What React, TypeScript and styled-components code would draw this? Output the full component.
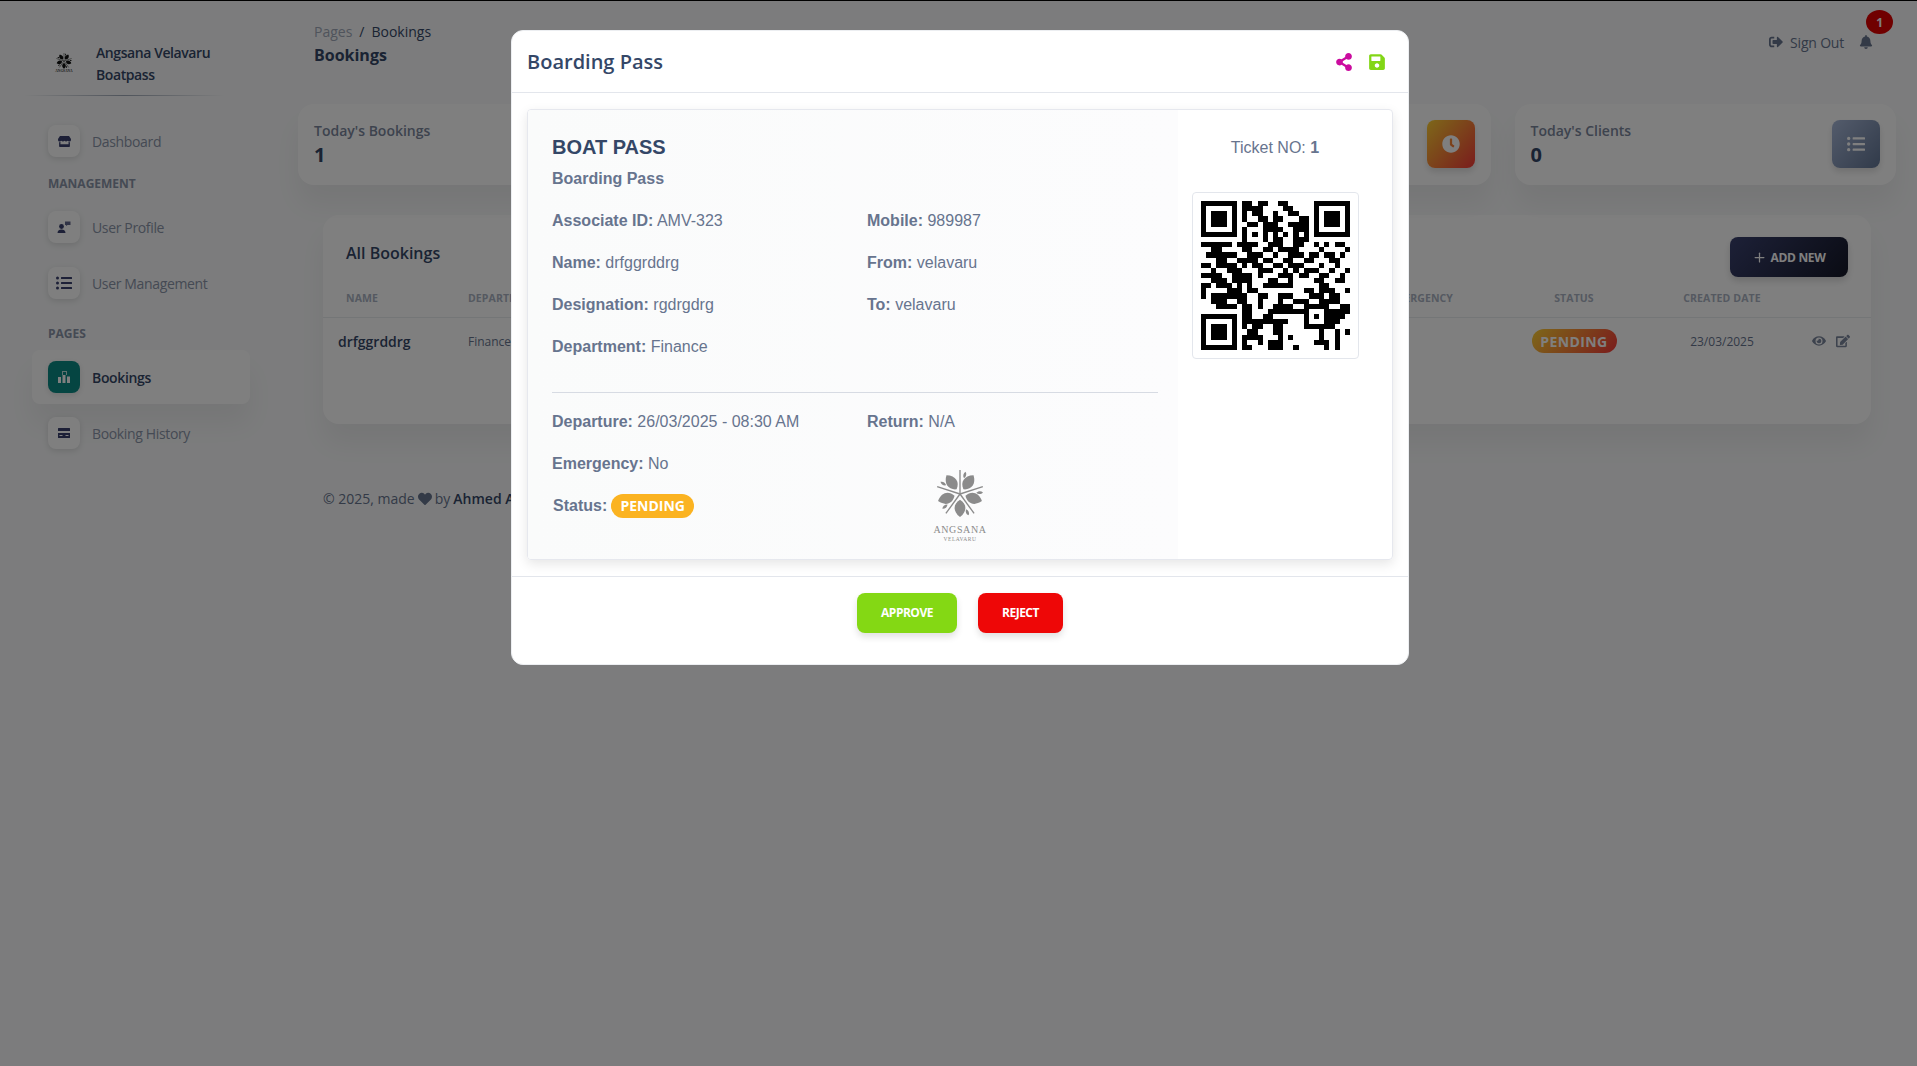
import React from 'react';
import styled, { createGlobalStyle } from 'styled-components';
import { FaBell, FaClock, FaEdit, FaEye, FaHeart, FaListUl, FaSave, FaShareAlt, FaSignOutAlt, FaStore } from 'react-icons/fa';
import { Plus } from 'lucide-react';

const Global = createGlobalStyle`
  html, body { margin: 0; padding: 0; height: 100%; }
  body { background: #f8f9fa; font-family: "Open Sans", "Liberation Sans", sans-serif; color: #67748e; overflow: hidden; }
  * { box-sizing: border-box; }
`;

const Page = styled.div`
  display: flex;
  min-height: 1066px;
  border-top: 1px solid #000;
`;

/* ---------- sidebar ---------- */
const Sidebar = styled.aside`
  width: 298px;
  flex: none;
  padding: 41px 48px 0 32px;
`;
const Brand = styled.div`
  display: flex;
  align-items: center;
  gap: 23px;
  padding-left: 23px;
  color: #344767;
  font-size: 14px;
  font-weight: 600;
  line-height: 22px;
  letter-spacing: -0.42px;
`;
const BrandDivider = styled.div`
  height: 1px;
  width: 200px;
  margin: 9px 0 18px -8px;
  background: linear-gradient(90deg, transparent, rgba(52, 71, 103, 0.45) 50%, transparent);
`;
const NavItem = styled.div<{ $active?: boolean }>`
  display: flex;
  align-items: center;
  gap: 12px;
  height: 54px;
  padding-left: 16px;
  margin-bottom: 2px;
  border-radius: 8px;
  font-size: 14px;
  letter-spacing: -0.35px;
  font-weight: ${p => (p.$active ? 600 : 400)};
  color: ${p => (p.$active ? '#344767' : '#8a94a8')};
  background: ${p => (p.$active ? '#fff' : 'transparent')};
  box-shadow: ${p => (p.$active ? '0 20px 27px rgba(0,0,0,.05)' : 'none')};
`;
const NavIcon = styled.span<{ $active?: boolean; $size?: number }>`
  width: 32px;
  height: 32px;
  border-radius: 8px;
  display: flex;
  align-items: center;
  justify-content: center;
  color: ${p => (p.$active ? '#fff' : '#3a416f')};
  background: ${p => (p.$active ? '#0a8a84' : '#fff')};
  box-shadow: 0 2px 6px rgba(0, 0, 0, 0.12);
  font-size: ${p => p.$size || 13}px;
`;
const SectionLabel = styled.div<{ $top: number; $bottom: number }>`
  margin: ${p => p.$top}px 0 ${p => p.$bottom}px 16px;
  font-size: 12px;
  line-height: 16px;
  font-weight: 700;
  color: #8a94a8;
`;

/* ---------- main ---------- */
const Main = styled.main`
  flex: 1;
  min-width: 0;
`;
const Navbar = styled.header`
  height: 103px;
  padding: 21px 44px 0 16px;
  display: flex;
  justify-content: space-between;
`;
const Breadcrumb = styled.div`
  font-size: 14px;
  line-height: 20px;
  color: #344767;
  display: flex;
  gap: 7px;
`;
const Crumb = styled.span`
  color: #a0a8b8;
`;
const PageTitle = styled.div`
  margin-top: 1px;
  font-size: 16px;
  line-height: 24px;
  font-weight: 700;
  color: #344767;
`;
const NavActions = styled.div`
  display: flex;
  align-items: center;
  height: 20px;
  margin-top: 10px;
  gap: 15px;
  font-size: 14px;
  font-weight: 500;
  letter-spacing: -0.2px;
  color: #67748e;
  position: relative;
`;
const SignOut = styled.span`
  display: flex;
  align-items: center;
  gap: 7px;
`;
const BellBadge = styled.span`
  position: absolute;
  right: -20px;
  top: -22px;
  width: 27px;
  height: 24px;
  border-radius: 50%;
  background: #e00000;
  color: #fff;
  font-size: 12px;
  font-weight: 700;
  display: flex;
  align-items: center;
  justify-content: center;
`;
const StatGrid = styled.section`
  display: grid;
  grid-template-columns: repeat(4, 1fr);
  gap: 24px;
  padding-right: 21px;
`;
const StatCard = styled.div`
  height: 81px;
  border-radius: 16px;
  background: #fff;
  padding: 16px;
  display: flex;
  justify-content: space-between;
  box-shadow: 0 20px 27px rgba(0, 0, 0, 0.05);
`;
const StatLabel = styled.div`
  font-size: 14px;
  line-height: 22px;
  font-weight: 600;
  color: #7b869c;
`;
const StatValue = styled.div`
  font-size: 20px;
  line-height: 26px;
  font-weight: 700;
  color: #344767;
`;
const StatIcon = styled.span<{ $tone: 'warning' | 'secondary' }>`
  width: 48px;
  height: 48px;
  border-radius: 8px;
  color: #fff;
  font-size: 18px;
  display: flex;
  align-items: center;
  justify-content: center;
  box-shadow: 0 4px 6px rgba(0, 0, 0, 0.12);
  background: ${p =>
    p.$tone === 'warning'
      ? 'linear-gradient(310deg, #f53939, #fbcf33)'
      : 'linear-gradient(310deg, #627594, #a8b8d8)'};
`;
const TableCard = styled.section`
  margin: 30px 46px 0 25px;
  min-height: 209px;
  border-radius: 16px;
  background: #fff;
  box-shadow: 0 20px 27px rgba(0, 0, 0, 0.05);
  padding-top: 22px;
`;
const TableTop = styled.div`
  display: flex;
  justify-content: space-between;
  align-items: center;
  height: 40px;
  padding: 0 23px;
`;
const TableTitle = styled.h6`
  margin: 0 0 9px;
  font-size: 16px;
  font-weight: 600;
  color: #344767;
`;
const AddButton = styled.button`
  width: 118px;
  height: 40px;
  border: 0;
  border-radius: 8px;
  background: linear-gradient(310deg, #141727, #3a416f);
  color: #fff;
  font: 700 12px "Open Sans", sans-serif;
  letter-spacing: -0.3px;
  display: flex;
  align-items: center;
  justify-content: center;
  gap: 3px;
  box-shadow: 0 4px 7px rgba(0, 0, 0, 0.15);
`;
const TableGrid = styled.div`
  display: grid;
  grid-template-columns: 145px 840px 145px 195px 148px 75px;
  align-items: center;
`;
const TableHead = styled(TableGrid)`
  height: 41px;
  padding-top: 1px;
  border-bottom: 1px solid #e9ecef;
  font-size: 10.5px;
  font-weight: 700;
  letter-spacing: 0.1px;
  color: #aab2c2;
  text-transform: uppercase;
`;
const HeadCell = styled.span<{ $align?: string; $pad?: number }>`
  text-align: ${p => p.$align || 'left'};
  padding-left: ${p => p.$pad || 0}px;
`;
const TableRow = styled(TableGrid)`
  height: 46px;
  font-size: 12px;
  color: #67748e;
`;
const NameCell = styled.span`
  font-size: 14px;
  font-weight: 600;
  color: #344767;
  padding-left: 15px;
`;
const CellCenter = styled.span<{ $pad?: number }>`
  display: flex;
  justify-content: center;
  padding-left: ${p => p.$pad || 0}px;
`;
const RowBadge = styled.span`
  width: 85px;
  height: 24px;
  border-radius: 12px;
  background: linear-gradient(310deg, #f53939, #fbcf33);
  color: #fff;
  font-size: 14px;
  font-weight: 700;
  letter-spacing: 0.4px;
  display: flex;
  align-items: center;
  justify-content: center;
`;
const Actions = styled.span`
  display: flex;
  gap: 10px;
  padding-left: 16px;
  font-size: 14px;
  align-items: center;
  color: #7b869c;
`;
const Footer = styled.footer`
  margin: 65px 0 0 25px;
  font-size: 14px;
  line-height: 20px;
  color: #67748e;
  display: flex;
  align-items: center;
  gap: 3px;
`;
const FooterStrong = styled.b`
  font-weight: 600;
  color: #344767;
`;

/* ---------- modal ---------- */
const Overlay = styled.div`
  position: fixed;
  inset: 0;
  background: rgba(0, 0, 0, 0.5);
  padding: 30px 0 0 511px;
`;
const Modal = styled.div`
  width: 898px;
  height: 635px;
  background: #fff;
  border: 1px solid #eceef1;
  border-radius: 12px;
`;
const ModalHeader = styled.div`
  height: 62px;
  border-bottom: 1px solid #e3e6ec;
  display: flex;
  align-items: center;
  justify-content: space-between;
  padding: 0 22px 0 15px;
`;
const ModalTitle = styled.h5`
  margin: 0;
  font-size: 20px;
  font-weight: 600;
  color: #344767;
`;
const HeaderIcons = styled.div`
  display: flex;
  gap: 15px;
  font-size: 18px;
  align-items: center;
`;
const IconTint = styled.span<{ $color: string }>`
  display: flex;
  color: ${p => p.$color};
`;
const ModalBody = styled.div`
  padding: 16px 15px 16px;
`;
const Pass = styled.div`
  height: 451px;
  display: flex;
  border: 1px solid #e6e8ee;
  border-radius: 4px;
  box-shadow: 0 4px 12px rgba(0, 0, 0, 0.1);
  font-family: "Liberation Sans", Arial, sans-serif;
  font-size: 16px;
  line-height: 24px;
  color: #67748e;
  overflow: hidden;
`;
const PassLeft = styled.div`
  width: 650px;
  flex: none;
  padding: 25px 20px 0 24px;
  background: linear-gradient(90deg, #fafbfb, #fcfcfd);
`;
const PassRight = styled.div`
  flex: 1;
  display: flex;
  flex-direction: column;
  align-items: center;
  padding: 26px 20px 0 0;
`;
const PassTitle = styled.div`
  font-size: 20px;
  line-height: 24px;
  font-weight: 700;
  color: #344767;
`;
const PassSubtitle = styled.div`
  margin: 10px 0 20px;
  font-weight: 700;
  line-height: 20px;
`;
const InfoGrid = styled.div`
  display: grid;
  grid-template-columns: 315px 1fr;
  grid-auto-rows: 24px;
  row-gap: 18px;
`;
const InfoItem = styled.div``;
const InfoKey = styled.b`
  font-weight: 700;
`;
const PassDivider = styled.div`
  height: 1px;
  background: #d7dbe3;
  margin: 33px 0 17px;
`;
const StatusRow = styled.div`
  display: flex;
  align-items: center;
  gap: 4px;
  padding-left: 1px;
  font-weight: 700;
`;
const StatusBadge = styled.span`
  width: 83px;
  height: 24px;
  border-radius: 12px;
  background: #fbb321;
  color: #fff;
  font: 700 14px/24px "Open Sans", sans-serif;
  text-align: center;
`;
const LogoCell = styled.div`
  grid-column: 2;
  grid-row: 2 / span 2;
  align-self: start;
  width: 56px;
  margin: 18px 0 0 65px;
  display: flex;
  flex-direction: column;
  align-items: center;
  color: #8b8b8b;
  font-family: "Liberation Serif", serif;
`;
const LogoName = styled.span`
  font-size: 10px;
  line-height: 10px;
  margin-top: 7px;
  letter-spacing: 0.6px;
  white-space: nowrap;
`;
const LogoPlace = styled.span`
  font-size: 5.5px;
  line-height: 8px;
  letter-spacing: 0.5px;
`;
const TinyLogo = styled.div`
  width: 18px;
  height: 22px;
  flex: none;
  display: flex;
  flex-direction: column;
  align-items: center;
  color: #333;
  font-family: "Liberation Serif", serif;
`;
const TinyName = styled.span`
  font-size: 3.5px;
  line-height: 5px;
  letter-spacing: 0;
  white-space: nowrap;
`;
const TicketNo = styled.div`
  margin-bottom: 32px;
`;
const QrBox = styled.div`
  padding: 8px;
  border: 1px solid #e3e6ec;
  border-radius: 4px;
  line-height: 0;
`;
const ModalFooter = styled.div`
  border-top: 1px solid #e3e6ec;
  padding-top: 16px;
  display: flex;
  justify-content: center;
  gap: 21px;
`;
const ActionButton = styled.button<{ $bg: string; $w: number }>`
  width: ${p => p.$w}px;
  height: 40px;
  border: 0;
  border-radius: 8px;
  padding: 0 0 2px;
  background: ${p => p.$bg};
  color: #fff;
  font: 700 12px "Open Sans", sans-serif;
  letter-spacing: -0.5px;
  box-shadow: 0 4px 7px rgba(0, 0, 0, 0.12);
`;
const FlowerSvg = styled.svg`
  flex: none;
  display: block;
`;

/* ---------- drawings ---------- */
const Flower = ({ size, color }: { size: number; color: string }) => (
  <FlowerSvg width={size} height={size} viewBox="-25 -25 50 50" fill={color}>
    {[0, 72, 144, 216, 288].map(r => (
      <g key={r} transform={`rotate(${r})`}>
        <path d="M0 0L0 -25" stroke={color} strokeWidth="1.4" />
        <path transform="rotate(36)" d="M0 -6C7 -10 8 -18 0 -24C-8 -18 -7 -10 0 -6Z" />
        <path transform="rotate(14)" d="M0 -17C2 -19 2 -22 0 -24C-2 -22 -2 -19 0 -17Z" />
      </g>
    ))}
  </FlowerSvg>
);

const UserFlagIcon = () => (
  <svg width="14" height="14" viewBox="0 0 14 14" fill="currentColor">
    <circle cx="4.5" cy="6.5" r="2.4" />
    <path d="M0.5 13c0-2.4 1.8-3.5 4-3.5s4 1.100 4 3.500z" />
    <path d="M8 1.500h5.500v3.500h-3l-1.500 1v-1h-1z" opacity=".8" />
  </svg>
);
const ChartHouseIcon = () => (
  <svg width="14" height="14" viewBox="0 0 14 14" fill="currentColor">
    <path d="M5 1h5v4H9V2H6v3H5z" opacity=".75" />
    <rect x="1" y="7" width="3" height="6" />
    <rect x="5.500" y="5" width="3" height="8" />
    <rect x="10" y="6.500" width="3" height="6.500" />
  </svg>
);
const CardIcon = () => (
  <svg width="14" height="14" viewBox="0 0 14 14" fill="currentColor">
    <path d="M1 2.500a.5.5 0 0 1 .5-.5h11a.5.5 0 0 1 .5.500V5H1z" />
    <path fillRule="evenodd" d="M1 7h12v4.500a.5.5 0 0 1-.5.500h-11a.5.5 0 0 1-.5-.500zM2.500 9v1h3V9zM8.500 9v1h3V9z" />
  </svg>
);

const QR = [
  '11111110110110011000001111111',
  '10000010111100001100001000001',
  '10111010101100100110001011101',
  '10111010100110110001101011101',
  '10111010011011100111101011101',
  '10000010100011110011101000001',
  '11111110101010101010101111111',
  '00000000100010110011100000000',
  '11111101111001110011001010110',
  '00110000110011011110000100001',
  '01111110011100100111011011010',
  '00011001111011001100110001100',
  '11011110101100110111000100100',
  '00100111000111001010111001001',
  '11110011110100011101100110010',
  '00111011110001100100001100110',
  '11011101010011111100000110000',
  '10000111011000000000110111001',
  '10111111100110011100011101100',
  '00111001100100010011100111100',
  '00011110110100111100111110011',
  '00000000110001111111100011111',
  '11111110110011000000101011110',
  '10000010111111111000100011100',
  '10111010101100110000111111000',
  '10111010011000110000000100101',
  '10111010111100010100000100100',
  '10000010100101110000001110100',
  '11111110110001110010000010100',
];

const QrCode = () => (
  <svg width="149" height="149" viewBox="0 0 29 29" shapeRendering="crispEdges">
    <path
      fill="#000"
      d={QR.map((row, y) =>
        row.split('').map((c, x) => (c === '1' ? `M${x} ${y}h1v1h-1z` : '')).join('')
      ).join('')}
    />
  </svg>
);

export default function App() {
  return (
    <>
      <Global />
      <Page>
        <Sidebar>
          <Brand>
            <TinyLogo>
              <Flower size={16} color="#111" />
              <TinyName>ANGSANA</TinyName>
            </TinyLogo>
            <div>
              Angsana Velavaru
              <br />
              Boatpass
            </div>
          </Brand>
          <BrandDivider />
          <NavItem>
            <NavIcon><FaStore /></NavIcon>Dashboard
          </NavItem>
          <SectionLabel $top={8} $bottom={8}>MANAGEMENT</SectionLabel>
          <NavItem>
            <NavIcon><UserFlagIcon /></NavIcon>User Profile
          </NavItem>
          <NavItem>
            <NavIcon $size={16}><FaListUl /></NavIcon>User Management
          </NavItem>
          <SectionLabel $top={16} $bottom={8}>PAGES</SectionLabel>
          <NavItem $active>
            <NavIcon $active><ChartHouseIcon /></NavIcon>Bookings
          </NavItem>
          <NavItem>
            <NavIcon><CardIcon /></NavIcon>Booking History
          </NavItem>
        </Sidebar>
        <Main>
          <Navbar>
            <div>
              <Breadcrumb>
                <Crumb>Pages</Crumb>
                <span>/</span>
                <span>Bookings</span>
              </Breadcrumb>
              <PageTitle>Bookings</PageTitle>
            </div>
            <NavActions>
              <SignOut><FaSignOutAlt />Sign Out</SignOut>
              <FaBell />
              <BellBadge>1</BellBadge>
            </NavActions>
          </Navbar>
          <StatGrid>
            <StatCard>
              <div>
                <StatLabel>Today's Bookings</StatLabel>
                <StatValue>1</StatValue>
              </div>
            </StatCard>
            <StatCard />
            <StatCard>
              <div />
              <StatIcon $tone="warning"><FaClock /></StatIcon>
            </StatCard>
            <StatCard>
              <div>
                <StatLabel>Today's Clients</StatLabel>
                <StatValue>0</StatValue>
              </div>
              <StatIcon $tone="secondary"><FaListUl /></StatIcon>
            </StatCard>
          </StatGrid>
          <TableCard>
            <TableTop>
              <TableTitle>All Bookings</TableTitle>
              <AddButton><Plus size={15} strokeWidth={2} />ADD NEW</AddButton>
            </TableTop>
            <TableHead>
              <HeadCell $pad={23}>Name</HeadCell>
              <HeadCell>Department</HeadCell>
              <HeadCell $align="right">Emergency</HeadCell>
              <HeadCell $align="center" $pad={47}>Status</HeadCell>
              <HeadCell $align="center">Created Date</HeadCell>
              <span />
            </TableHead>
            <TableRow>
              <NameCell>drfggrddrg</NameCell>
              <span>Finance</span>
              <span />
              <CellCenter $pad={47}><RowBadge>PENDING</RowBadge></CellCenter>
              <CellCenter>23/03/2025</CellCenter>
              <Actions><FaEye /><FaEdit /></Actions>
            </TableRow>
          </TableCard>
          <Footer>
            © 2025, made <FaHeart /> by <FooterStrong>Ahmed A</FooterStrong>
          </Footer>
        </Main>
      </Page>
      <Overlay>
        <Modal>
          <ModalHeader>
            <ModalTitle>Boarding Pass</ModalTitle>
            <HeaderIcons>
              <IconTint $color="#cb0c9f"><FaShareAlt /></IconTint>
              <IconTint $color="#82d616"><FaSave /></IconTint>
            </HeaderIcons>
          </ModalHeader>
          <ModalBody>
            <Pass>
              <PassLeft>
                <PassTitle>BOAT PASS</PassTitle>
                <PassSubtitle>Boarding Pass</PassSubtitle>
                <InfoGrid>
                  <InfoItem><InfoKey>Associate ID:</InfoKey> AMV-323</InfoItem>
                  <InfoItem><InfoKey>Mobile:</InfoKey> 989987</InfoItem>
                  <InfoItem><InfoKey>Name:</InfoKey> drfggrddrg</InfoItem>
                  <InfoItem><InfoKey>From:</InfoKey> velavaru</InfoItem>
                  <InfoItem><InfoKey>Designation:</InfoKey> rgdrgdrg</InfoItem>
                  <InfoItem><InfoKey>To:</InfoKey> velavaru</InfoItem>
                  <InfoItem><InfoKey>Department:</InfoKey> Finance</InfoItem>
                </InfoGrid>
                <PassDivider />
                <InfoGrid>
                  <InfoItem><InfoKey>Departure:</InfoKey> 26/03/2025 - 08:30 AM</InfoItem>
                  <InfoItem><InfoKey>Return:</InfoKey> N/A</InfoItem>
                  <InfoItem><InfoKey>Emergency:</InfoKey> No</InfoItem>
                  <LogoCell>
                    <Flower size={48} color="#8b8b8b" />
                    <LogoName>ANGSANA</LogoName>
                    <LogoPlace>VELAVARU</LogoPlace>
                  </LogoCell>
                  <StatusRow>Status: <StatusBadge>PENDING</StatusBadge></StatusRow>
                </InfoGrid>
              </PassLeft>
              <PassRight>
                <TicketNo>Ticket NO: <InfoKey>1</InfoKey></TicketNo>
                <QrBox><QrCode /></QrBox>
              </PassRight>
            </Pass>
          </ModalBody>
          <ModalFooter>
            <ActionButton $bg="#84d814" $w={100}>APPROVE</ActionButton>
            <ActionButton $bg="#ee0707" $w={85}>REJECT</ActionButton>
          </ModalFooter>
        </Modal>
      </Overlay>
    </>
  );
}
